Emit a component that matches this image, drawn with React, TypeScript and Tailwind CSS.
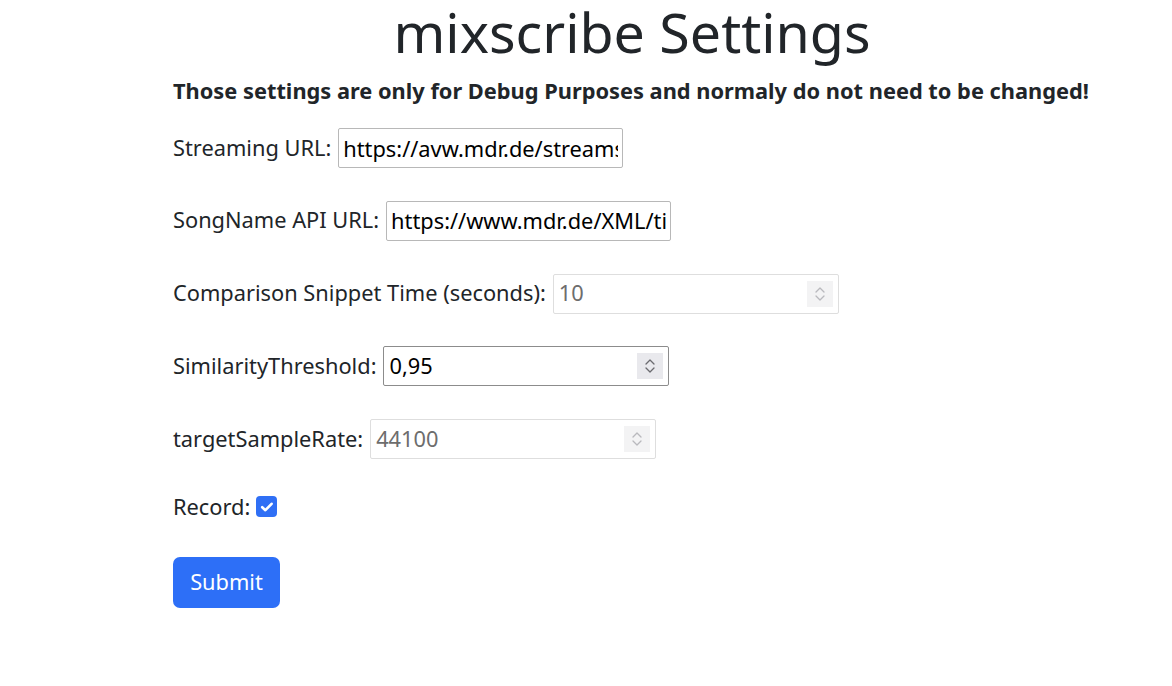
const Spinner = ({ disabled }: { disabled?: boolean }) => (
  <div
    className={`flex h-[26px] w-[26px] shrink-0 items-center justify-center ${
      disabled ? 'bg-[#f3f3f4]' : 'bg-[#e9e9ed]'
    }`}
  >
    <svg width="12" height="18" viewBox="0 0 12 18" fill="none">
      <path
        d="M2 7 L6 3 L10 7 M2 11 L6 15 L10 11"
        stroke={disabled ? '#b9b9bd' : '#6b6b70'}
        strokeWidth="1.3"
        strokeLinecap="round"
        strokeLinejoin="round"
      />
    </svg>
  </div>
);

const TextField = ({ label, value }: { label: string; value: string }) => (
  <div className="flex h-[40px] items-center">
    <label className="mr-[7px]">{label}</label>
    <input
      type="text"
      defaultValue={value}
      className="h-[40px] w-[285px] rounded-[2px] border border-[#b8b8b8] bg-white px-[4px] text-[21.8px] text-black outline-none"
    />
  </div>
);

const NumberField = ({
  label,
  value,
  disabled,
}: {
  label: string;
  value: string;
  disabled?: boolean;
}) => (
  <div className="flex h-[40px] items-center">
    <label className="mr-[7px]">{label}</label>
    <div
      className={`flex h-[40px] w-[286px] items-center rounded-[2px] border bg-white pl-[5px] pr-[5px] ${
        disabled ? 'border-[#dedede] text-[#6d6d6d]' : 'border-[#8c8c8c] text-black'
      }`}
    >
      <input
        type="text"
        defaultValue={value}
        disabled={disabled}
        className="min-w-0 flex-1 bg-transparent text-[21.8px] outline-none"
      />
      <Spinner disabled={disabled} />
    </div>
  </div>
);

export default function App() {
  return (
    <div
      className="min-h-screen bg-white text-[21.8px] text-[#212529]"
      style={{ fontFamily: '"Noto Sans", "Open Sans", sans-serif' }}
    >
      <div className="ml-[173px] w-[918px]">
        <h1 className="text-center text-[55.5px] leading-[64px] font-normal">
          mixscribe Settings
        </h1>
        <p className="mt-[12px] leading-[30px] font-bold">
          Those settings are only for Debug Purposes and normaly do not need to be changed!
        </p>
        <form className="mt-[22px] flex flex-col gap-[32.75px]" onSubmit={(e) => e.preventDefault()}>
          <TextField label="Streaming URL:" value="https://avw.mdr.de/streams/284320-0_aac_high.m3u8" />
          <TextField label="SongName API URL:" value="https://www.mdr.de/XML/titellisten/jump_onair.json" />
          <NumberField label="Comparison Snippet Time (seconds):" value="10" disabled />
          <NumberField label="SimilarityThreshold:" value="0,95" />
          <NumberField label="targetSampleRate:" value="44100" disabled />
          <div className="flex h-[30px] items-center leading-[30px]">
            <span className="mr-[6px]">Record:</span>
            <span className="flex h-[21px] w-[21px] items-center justify-center rounded-[4px] bg-[#2f6ff5]">
              <svg width="16" height="16" viewBox="0 0 16 16" fill="none">
                <path
                  d="M3.2 8.2 L6.4 11.2 L12.6 4.8"
                  stroke="white"
                  strokeWidth="2.6"
                  strokeLinecap="round"
                  strokeLinejoin="round"
                />
              </svg>
            </span>
          </div>
          <div className="pt-[2px]">
            <button
              type="submit"
              className="h-[51px] w-[107px] rounded-[7px] bg-[#2d6ff7] text-[21.8px] text-white"
            >
              Submit
            </button>
          </div>
        </form>
      </div>
    </div>
  );
}
